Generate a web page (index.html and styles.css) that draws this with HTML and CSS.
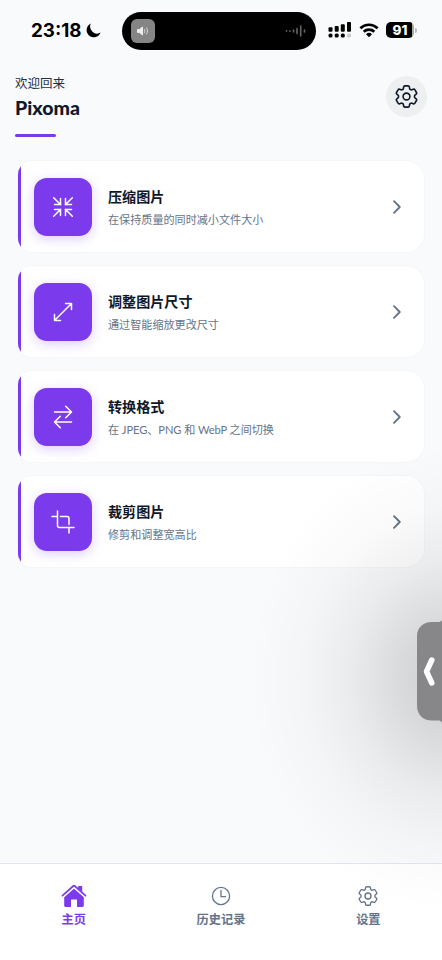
FILE: index.html
```html
<!DOCTYPE html>
<html lang="zh-CN">
<head>
<meta charset="utf-8">
<meta name="viewport" content="width=device-width, initial-scale=1">
<title>Pixoma</title>
<link rel="stylesheet" href="styles.css">
</head>
<body>
<svg class="defs" width="0" height="0">
  <symbol id="gear" viewBox="2.25 2.25 19.5 19.5"><path d="M9.594 3.94c.09-.542.56-.94 1.11-.94h2.593c.55 0 1.02.398 1.11.94l.213 1.281c.063.374.313.686.645.87.074.04.147.083.22.127.325.196.72.257 1.075.124l1.217-.456a1.125 1.125 0 0 1 1.37.49l1.296 2.247a1.125 1.125 0 0 1-.26 1.431l-1.003.827c-.293.241-.438.613-.43.992a7.723 7.723 0 0 1 0 .255c-.008.378.137.75.43.991l1.004.827c.424.35.534.955.26 1.43l-1.298 2.247a1.125 1.125 0 0 1-1.369.491l-1.217-.456c-.355-.133-.75-.072-1.076.124a6.47 6.47 0 0 1-.22.128c-.331.183-.581.495-.644.869l-.213 1.281c-.09.543-.56.94-1.11.94h-2.594c-.55 0-1.019-.398-1.11-.94l-.213-1.281c-.062-.374-.312-.686-.644-.87a6.52 6.52 0 0 1-.22-.127c-.325-.196-.72-.257-1.076-.124l-1.217.456a1.125 1.125 0 0 1-1.369-.49l-1.297-2.247a1.125 1.125 0 0 1 .26-1.431l1.004-.827c.292-.24.437-.613.43-.991a6.932 6.932 0 0 1 0-.255c.007-.38-.138-.751-.43-.992l-1.004-.827a1.125 1.125 0 0 1-.26-1.43l1.297-2.247a1.125 1.125 0 0 1 1.37-.491l1.216.456c.356.133.751.072 1.076-.124.072-.044.146-.086.22-.128.332-.183.582-.495.644-.869l.214-1.28Z"/><circle cx="12" cy="12" r="2.9"/></symbol>
  <symbol id="chevron" viewBox="0 0 10 16"><path d="M2 2.200l5.800 5.800-5.800 5.800"/></symbol>
</svg>

<header class="status">
  <div class="clock"><span>23:18</span>
    <svg width="15" height="15" viewBox="0 0 15 15"><path d="M4.800.6A7.200 7.200 0 1 0 14.600 9.600 7 7 0 0 1 4.800.6Z"/></svg>
  </div>
  <div class="island">
    <span class="speaker"><svg width="14" height="12" viewBox="0 0 14 12"><path d="M1.500 4.500h2l3-2.500v8l-3-2.500h-2Z" fill="#eee" stroke="#eee" stroke-linejoin="round"/><path d="M8.500 4.500c.6 1 .6 2 0 3M10.500 3c1.400 2 1.400 4 0 6" fill="none" stroke="#ddd" stroke-linecap="round"/></svg></span>
    <svg class="wave" width="22" height="12" viewBox="0 0 22 12"><path d="M1.500 5.800v.4M5 5.800v.4M8.500 5v2M12 3.500v5M15.700 1v10M19.500 5v2"/></svg>
  </div>
  <div class="signals">
    <svg class="bars" width="24" height="16" viewBox="0 0 24 16"><rect x=".5" y="5.200" width="4" height="4.500" rx="1"/><rect x="6.700" y="4" width="4" height="5.700" rx="1"/><rect x="12.800" y="2.200" width="4" height="7.500" rx="1"/><rect x="19" y="0" width="4" height="9.700" rx="1"/><rect x=".5" y="11.500" width="4" height="4" rx="1.500"/><rect x="6.700" y="11.500" width="4" height="4" rx="1.500"/><rect x="12.800" y="11.500" width="4" height="4" rx="1.500"/><rect class="faint" x="19" y="11.500" width="4" height="4" rx="1.500"/></svg>
    <svg class="wifi" width="20" height="15" viewBox="0 0 20 15"><path d="M1.400 5.200a12.400 12.400 0 0 1 17.200 0M4.700 8.700a7.700 7.700 0 0 1 10.600 0"/><path class="dot" d="M10 14.200 7 11.200a4.300 4.300 0 0 1 6 0Z"/></svg>
    <div class="battery"><span>91</span></div><i class="cap"></i>
  </div>
</header>

<section class="hero">
  <div>
    <p class="welcome">欢迎回来</p>
    <h1>Pixoma</h1>
    <div class="rule"></div>
  </div>
  <button class="gear-button" aria-label="设置"><svg width="23" height="23"><use href="#gear"/></svg></button>
</section>

<main class="cards">
  <article class="card">
    <div class="tile"><svg width="24" height="24" viewBox="0 0 24 24"><path d="M2.700 2.700l7 7M9.500 3.500v6h-6M21.300 2.700l-7 7M14.500 3.500v6h6M2.700 21.300l7-7M9.500 20.500v-6h-6M21.300 21.300l-7-7M14.500 20.500v-6h6"/></svg></div>
    <div class="copy"><h2>压缩图片</h2><p>在保持质量的同时减小文件大小</p></div>
    <svg class="chevron" width="10" height="16"><use href="#chevron"/></svg>
  </article>
  <article class="card">
    <div class="tile"><svg width="24" height="24" viewBox="0 0 24 24"><path d="M3.500 20.500l17-17M14.500 3.500h6v6M3.500 14.500v6h6"/></svg></div>
    <div class="copy"><h2>调整图片尺寸</h2><p>通过智能缩放更改尺寸</p></div>
    <svg class="chevron" width="10" height="16"><use href="#chevron"/></svg>
  </article>
  <article class="card">
    <div class="tile"><svg width="24" height="24" viewBox="0 0 24 24"><path d="M3.500 7h17M14.700 1.200l5.800 5.800-5.800 5.800M20.500 17h-17M9.300 11.200l-5.800 5.800 5.800 5.800"/></svg></div>
    <div class="copy"><h2>转换格式</h2><p class="latin">在 JPEG、PNG 和 WebP 之间切换</p></div>
    <svg class="chevron" width="10" height="16"><use href="#chevron"/></svg>
  </article>
  <article class="card">
    <div class="tile"><svg width="24" height="24" viewBox="0 0 24 24"><path d="M6.500 1v14.500a2 2 0 0 0 2 2H23M1 6.500h4.500M9.500 6.500h6.500a2 2 0 0 1 2 2v6M18 18.500v4.500"/></svg></div>
    <div class="copy"><h2>裁剪图片</h2><p>修剪和调整宽高比</p></div>
    <svg class="chevron" width="10" height="16"><use href="#chevron"/></svg>
  </article>
</main>

<nav class="tabs">
  <a class="tab active"><svg width="26" height="24" viewBox="0 0 26 24"><path class="solid" d="M13 4.200 3.200 12.800V21.500a1.500 1.500 0 0 0 1.500 1.500H10v-7.500h6V23h5.300a1.500 1.500 0 0 0 1.500-1.500V12.800Z"/><path class="solid" d="M17.200 2h4v6.500l-4-3.500Z"/><path class="gap" d="M1.700 12.600 13 2.700l11.300 9.900"/><path class="roof" d="M1.500 11.600 12.300 2q.7-.6 1.400 0l10.800 9.600"/></svg><span>主页</span></a>
  <a class="tab"><svg width="20" height="24" viewBox="0 0 20 24"><circle cx="10" cy="12" r="8.600"/><path d="M10 6.500V12.700h4.500"/></svg><span>历史记录</span></a>
  <a class="tab"><svg width="20" height="24"><use href="#gear"/></svg><span>设置</span></a>
</nav>

<div class="shade"></div>
<div class="drawer"><svg width="25" height="104" viewBox="0 0 25 104"><path d="M25 0c-1 1.500-2 2-4 2h-6C6 2 0 7.500 0 16.500v69c0 9 6 15 15 15h6c2 0 3 .5 4 2.500Z" fill="#878688"/><path d="M14.800 40 9.500 51.500l5.300 11.500" fill="none" stroke="#fff" stroke-width="5.500" stroke-linecap="round" stroke-linejoin="round"/></svg></div>
</body>
</html>
```
FILE: styles.css
```css
* { box-sizing: border-box; }
body {
  position: relative;
  margin: 0;
  width: 442px;
  height: 960px;
  overflow: hidden;
  display: flex;
  flex-direction: column;
  background: #f8fafc;
  color: #0f172a;
  font-family: Lato, "Noto Sans CJK SC", sans-serif;
}
h1, h2, p { margin: 0; }
.defs { position: absolute; }
#gear, #chevron { fill: none; stroke: currentColor; stroke-linecap: round; stroke-linejoin: round; }

.status {
  height: 62px;
  padding: 12px 23px 0 31px;
  display: grid;
  grid-template-columns: 91px 194px 1fr;
  align-items: start;
  color: #000;
  font-family: Inter, sans-serif;
}
.clock { height: 37px; display: flex; align-items: center; gap: 4px; font-size: 18.8px; font-weight: 700; }
.island {
  height: 38px;
  padding: 0 9px;
  display: flex;
  align-items: center;
  justify-content: space-between;
  border-radius: 19px;
  background: #000;
}
.speaker { width: 24px; height: 24px; display: grid; place-items: center; border-radius: 6px; background: #858585; }
.wave { stroke: #666; stroke-width: 1.6; stroke-linecap: round; }
.signals { height: 36px; padding-left: 12px; display: flex; align-items: center; }
.signals .bars { fill: #000; }
.signals .faint { fill: #ccc; }
.signals .wifi { margin: 0 7px; fill: none; stroke: #000; stroke-width: 2.7; }
.signals .dot { fill: #000; stroke: none; }
.battery {
  flex: none;
  width: 28px;
  height: 16px;
  border-radius: 5px;
  background: linear-gradient(90deg, #000 26px, #aaa 26px);
  color: #fff;
  font-size: 13.5px;
  font-weight: 800;
  line-height: 16px;
  text-align: center;
}
.cap { flex: none; width: 2px; height: 5px; margin-left: 1px; border-radius: 0 2px 2px 0; background: #bbb; }

.hero { height: 99px; padding: 12px 15px 0; display: flex; justify-content: space-between; }
.welcome { color: #272e3f; font-size: 12.5px; line-height: 19px; }
h1 { margin-top: 2px; font-size: 19.5px; line-height: 26px; font-weight: 900; }
.rule { width: 41px; height: 3px; margin-top: 13px; border-radius: 2px; background: #7c3aed; }
.gear-button {
  width: 41px;
  height: 41px;
  margin-top: 2px;
  padding: 0;
  display: grid;
  place-items: center;
  border: 0;
  border-radius: 50%;
  background: #edeff1;
  color: #0f172a;
}
.gear-button svg { stroke-width: 1.35; }

.cards { padding: 0 18px; display: flex; flex-direction: column; gap: 14px; }
.card {
  height: 91px;
  padding: 0 22px 0 16px;
  display: flex;
  align-items: center;
  border-radius: 14px 18px 18px 14px;
  background: linear-gradient(90deg, #7c3aed 3px, #fff 3px);
  box-shadow: 0 0 0 1px #f5f6f8;
}
.tile {
  flex: none;
  width: 58px;
  height: 58px;
  display: grid;
  place-items: center;
  border-radius: 13px;
  background: #7c3aed;
  box-shadow: 0 3px 12px rgba(124, 58, 237, .25);
}
.tile svg { fill: none; stroke: #fff; stroke-width: 1.5; stroke-linecap: round; stroke-linejoin: round; }
.copy { flex: 1; margin: 2px 0 0 16px; }
h2 { font-size: 14.1px; line-height: 22px; font-weight: 700; }
.copy p { margin-top: 2px; color: #64748b; font-size: 11.1px; line-height: 20px; }
.copy .latin { letter-spacing: -.06px; }
.chevron { color: #64748b; stroke-width: 1.9; }

.tabs {
  height: 97px;
  margin-top: auto;
  padding-top: 20px;
  display: grid;
  grid-template-columns: repeat(3, 1fr);
  border-top: 1px solid #e2e5eb;
  background: #fff;
}
.tab { display: flex; flex-direction: column; align-items: center; gap: 2px; color: #64748b; font-size: 12.2px; line-height: 20px; font-weight: 700; }
.tab svg { fill: none; stroke: currentColor; stroke-width: 1.3; stroke-linecap: round; stroke-linejoin: round; }
.active { color: #7c3aed; }
.tab .solid { fill: currentColor; stroke: none; }
.tab .gap { stroke: #fff; stroke-width: 2.8; }
.tab .roof { stroke-width: 1.7; }

.shade {
  position: absolute;
  inset: 0;
  pointer-events: none;
  background: radial-gradient(ellipse 205px 235px at 452px 678px, rgba(0,0,0,.18) 0%, rgba(0,0,0,.13) 25%, rgba(0,0,0,.06) 50%, rgba(0,0,0,.02) 73%, transparent 100%);
}
.drawer { position: absolute; right: 0; top: 620px; width: 25px; height: 104px; }
.drawer svg { display: block; }
```
